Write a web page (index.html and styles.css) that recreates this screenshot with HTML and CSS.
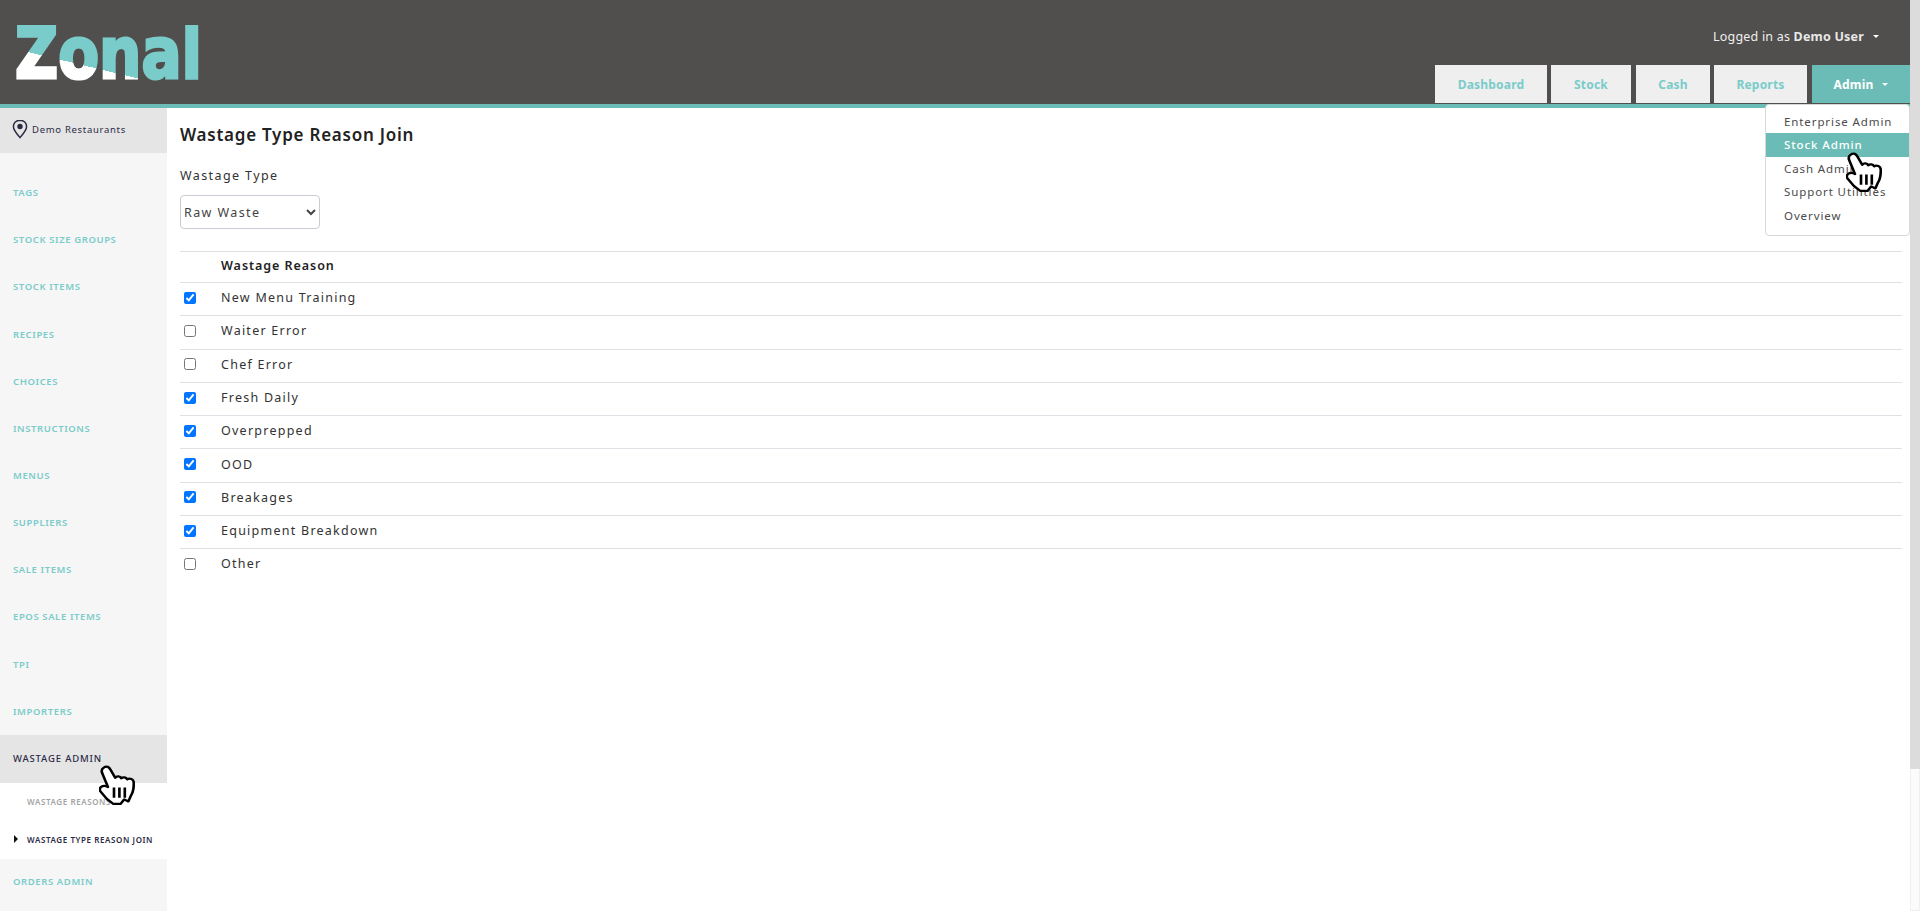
FILE: index.html
```html
<!DOCTYPE html>
<html lang="en">

<head>
    <meta charset="UTF-8">
    <meta name="viewport" content="width=device-width, initial-scale=1.0">
    <title>Wastage Type Reason Join</title>
    <link rel="stylesheet" href="styles.css">
</head>

<body>
    <div class="page">
        <div class="app">
            <header class="top-bar">
                <svg class="logo" width="210" height="104" viewBox="0 0 210 104">
                    <defs>
                        <linearGradient id="logoFill" gradientUnits="userSpaceOnUse" x1="82.800" y1="44" x2="73.200" y2="84">
                            <stop offset="0.5" stop-color="#7accca"></stop>
                            <stop offset="0.5" stop-color="#ffffff"></stop>
                        </linearGradient>
                        <clipPath id="logoClip">
                            <rect x="0" y="25" width="210" height="79"></rect>
                        </clipPath>
                    </defs>
                    <g clip-path="url(#logoClip)">
                        <text class="logo-text" x="15" y="78" textLength="187" lengthAdjust="spacingAndGlyphs" fill="url(#logoFill)" stroke="url(#logoFill)">Zonal</text>
                    </g>
                </svg>
                <div class="top-right">
                    <div class="user-line">Logged in as <b>Demo User</b><span class="caret caret-user"></span></div>
                    <nav class="tabs">
                        <a class="tab tab-dashboard">Dashboard</a>
                        <a class="tab tab-stock">Stock</a>
                        <a class="tab tab-cash">Cash</a>
                        <a class="tab tab-reports">Reports</a>
                        <a class="tab tab-admin active">Admin<span class="caret"></span></a>
                    </nav>
                </div>
            </header>
            <div class="teal-line"></div>

            <div class="content">
                <aside class="sidebar">
                    <div class="site-row">
                        <svg class="pin" width="16" height="20" viewBox="0 0 16 20">
                            <path d="M8 1.200C4.200 1.200 1.400 4 1.400 7.600C1.400 11.600 5.400 15.600 8 18.600C10.600 15.600 14.600 11.600 14.600 7.600C14.600 4 11.800 1.200 8 1.200Z" fill="none" stroke="#2b2b45" stroke-width="1.500"></path>
                            <circle cx="8" cy="7.500" r="2.700" fill="#2b2b45"></circle>
                        </svg>
                        <span>Demo Restaurants</span>
                    </div>
                    <ul class="side-menu">
                        <li>Tags</li>
                        <li>Stock Size Groups</li>
                        <li>Stock Items</li>
                        <li>Recipes</li>
                        <li>Choices</li>
                        <li>Instructions</li>
                        <li>Menus</li>
                        <li>Suppliers</li>
                        <li>Sale Items</li>
                        <li>EPOS Sale Items</li>
                        <li>TPI</li>
                        <li>Importers</li>
                        <li class="open">Wastage Admin</li>
                    </ul>
                    <ul class="sub-menu">
                        <li>Wastage Reasons</li>
                        <li class="current">Wastage Type Reason Join</li>
                    </ul>
                    <ul class="side-menu">
                        <li>Orders Admin</li>
                    </ul>
                </aside>

                <main class="main">
                    <h1>Wastage Type Reason Join</h1>
                    <label class="field-label" for="wastageType">Wastage Type</label>
                    <select id="wastageType" class="type-select">
                        <option>Raw Waste</option>
                    </select>
                    <table class="reason-table">
                        <thead>
                            <tr>
                                <th class="check-col"></th>
                                <th>Wastage Reason</th>
                            </tr>
                        </thead>
                        <tbody>
                            <tr><td class="check-col"><input type="checkbox" checked></td><td>New Menu Training</td></tr>
                            <tr><td class="check-col"><input type="checkbox"></td><td>Waiter Error</td></tr>
                            <tr><td class="check-col"><input type="checkbox"></td><td>Chef Error</td></tr>
                            <tr><td class="check-col"><input type="checkbox" checked></td><td>Fresh Daily</td></tr>
                            <tr><td class="check-col"><input type="checkbox" checked></td><td>Overprepped</td></tr>
                            <tr><td class="check-col"><input type="checkbox" checked></td><td>OOD</td></tr>
                            <tr><td class="check-col"><input type="checkbox" checked></td><td>Breakages</td></tr>
                            <tr><td class="check-col"><input type="checkbox" checked></td><td>Equipment Breakdown</td></tr>
                            <tr><td class="check-col"><input type="checkbox"></td><td>Other</td></tr>
                        </tbody>
                    </table>
                </main>
            </div>
        </div>

        <div class="scrollbar">
            <div class="scroll-thumb"></div>
        </div>
    </div>

    <!-- Dropdown hangs over the page -->
    <div class="admin-menu">
        <a>Enterprise Admin</a>
        <a class="hover">Stock Admin</a>
        <a>Cash Admin</a>
        <a>Support Utilities</a>
        <a>Overview</a>
    </div>

    <svg class="hand hand-top" width="36" height="40" viewBox="1 0 30 39" preserveAspectRatio="none">
        <use href="#handShape"></use>
    </svg>
    <svg class="hand hand-side" width="36" height="40" viewBox="1 0 30 39" preserveAspectRatio="none">
        <g id="handShape">
            <path d="M5 2.500C7.500 .5 9.500 2 10.500 4.500L14.500 12.500C16 10.500 18.500 10.800 19.500 13C21 11.500 23.500 11.800 24.500 14C26.500 12.500 30 13.500 30 17.500C30 23 29.500 27 27.500 30L25.500 35.500L22 33.500L19 38L13 38L7.500 33L2 25.500C.8 22 3.500 20 6.500 20.500L8.500 21.500L3.500 7.500C3 5.500 3.500 3.500 5 2.500Z" fill="#fff" stroke="#000" stroke-width="2.200" stroke-linejoin="round"></path>
            <path d="M13.500 22V32M18 22V32M22.500 22V32" fill="none" stroke="#000" stroke-width="2.200"></path>
        </g>
    </svg>
</body>

</html>
```

FILE: styles.css
```css
* {
    box-sizing: border-box;
}

html,
body {
    margin: 0;
    height: 911px;
    overflow: hidden;
}

body {
    font-family: "Noto Sans", "Open Sans", sans-serif;
    background: #fff;
    color: #333;
    letter-spacing: 1px;
}

.page {
    display: flex;
    height: 911px;
}

.app {
    flex: 1;
    min-width: 0;
}

/* Scrollbar */
.scrollbar {
    width: 10px;
    background: #fbfbfb;
    border: 1px solid #f0f0f0;
    border-top: none;
}

.scroll-thumb {
    height: 769px;
    margin: 0 -1px;
    background: #dcdcdc;
}

/* Header */
.top-bar {
    height: 104px;
    background: #504f4d;
    display: flex;
    justify-content: space-between;
}

.logo {
    width: 210px;
    height: 104px;
    overflow: visible;
}

.logo-text {
    font-family: "DejaVu Sans", sans-serif;
    font-weight: 700;
    font-size: 71px;
    letter-spacing: 0;
    stroke-width: 3px;
    stroke-linejoin: miter;
}

.top-right {
    display: flex;
    flex-direction: column;
    align-items: flex-end;
}

.user-line {
    margin-top: 27px;
    padding-right: 31px;
    height: 20px;
    line-height: 20px;
    font-size: 12.500px;
    letter-spacing: .2px;
    color: #eee;
}

.user-line b {
    font-weight: 700;
    color: #e8e8e8;
}

.caret {
    display: inline-block;
    margin-left: 9px;
    vertical-align: 3px;
    border-top: 3px solid #fff;
    border-left: 3px solid transparent;
    border-right: 3px solid transparent;
}

.tabs {
    display: flex;
    margin-top: 18px;
    height: 38px;
}

.tab {
    display: flex;
    align-items: center;
    justify-content: center;
    height: 38px;
    background: #efefef;
    color: #7accca;
    font-size: 12px;
    font-weight: 700;
    letter-spacing: .2px;
}

.tab-dashboard { width: 112px; margin-right: 4px; }
.tab-stock { width: 80px; margin-right: 5px; }
.tab-cash { width: 74px; margin-right: 4px; }
.tab-reports { width: 93px; margin-right: 5px; }
.tab-admin { width: 98px; }

.tab.active {
    background: #6bbcb6;
    color: #fff;
}

.teal-line {
    height: 4px;
    background: #6bbcb6;
}

/* Sidebar and main */
.content {
    display: flex;
    height: 803px;
    overflow: hidden;
}

.sidebar {
    width: 167px;
    flex-shrink: 0;
    background: #f6f6f6;
}

.site-row {
    height: 45px;
    background: #e5e5e5;
    display: flex;
    align-items: center;
    padding: 0 0 3px 12px;
    font-size: 9.500px;
    letter-spacing: .7px;
    color: #2b2b45;
}

.pin {
    margin-right: 4px;
}

.side-menu {
    list-style-type: none;
    margin: 0;
    padding: 16.200px 0 0;
}

.side-menu li {
    height: 47.150px;
    line-height: 47px;
    padding-left: 13px;
    font-size: 9.500px;
    font-weight: 600;
    text-transform: uppercase;
    letter-spacing: .6px;
    color: #7accca;
}

.side-menu li.open {
    height: 48px;
    background: #e5e5e5;
    font-weight: 500;
    letter-spacing: .85px;
    color: #2b2b45;
}

.sub-menu + .side-menu {
    padding-top: 0;
}

.sub-menu + .side-menu li {
    line-height: 46px;
}

.sub-menu {
    list-style-type: none;
    margin: 0;
    padding: 0;
    height: 76px;
    background: #fff;
}

.sub-menu li {
    height: 38px;
    line-height: 37px;
    padding-left: 27px;
    font-size: 8px;
    font-weight: 600;
    text-transform: uppercase;
    letter-spacing: .6px;
    color: #a3a3a3;
    white-space: nowrap;
}

.sub-menu li.current {
    position: relative;
    color: #2b2b45;
}

.sub-menu li.current::before {
    content: "";
    position: absolute;
    left: 14px;
    top: 14px;
    border-left: 4px solid #111;
    border-top: 4px solid transparent;
    border-bottom: 4px solid transparent;
}

.main {
    flex: 1;
    padding: 15px 8px 0 13px;
}

h1 {
    margin: 0 0 20px;
    font-size: 17px;
    line-height: 24px;
    font-weight: 600;
    letter-spacing: .75px;
    color: #222;
}

.field-label {
    display: block;
    font-size: 12.500px;
    line-height: 18px;
    letter-spacing: 1.400px;
    color: #333;
}

.type-select {
    display: block;
    width: 140px;
    height: 34px;
    margin-top: 10px;
    padding: 0;
    background: #fff;
    border: 1px solid #c9ccd3;
    border-radius: 4px;
    font-family: inherit;
    font-size: 12.500px;
    letter-spacing: 1.400px;
    text-indent: -1px;
    color: #444;
}

.reason-table {
    width: 100%;
    margin-top: 22px;
    border-collapse: collapse;
    font-size: 12.500px;
    letter-spacing: 1.250px;
}

.reason-table th,
.reason-table td {
    border-top: 1px solid #dee2e6;
    padding: 0;
    text-align: left;
    vertical-align: middle;
}

.reason-table th {
    height: 31px;
    padding-bottom: 4px;
    font-weight: 600;
    letter-spacing: .95px;
    color: #222;
}

.reason-table td {
    height: 33.300px;
    padding-bottom: 3px;
}

.reason-table .check-col {
    width: 41px;
    padding-left: 4px;
}

.check-col input {
    display: block;
    width: 12px;
    height: 12px;
    margin: 0;
}

.reason-table tbody tr:last-child td {
    height: 32px;
}

/* Admin dropdown */
.admin-menu {
    position: absolute;
    left: 1765px;
    top: 104px;
    width: 145px;
    height: 132px;
    padding-top: 5px;
    background: #fff;
    border: 1px solid #d8d8d8;
    border-radius: 4px;
    font-size: 11.500px;
    letter-spacing: .9px;
    color: #4b4b4b;
}

.admin-menu a {
    display: block;
    height: 23.400px;
    line-height: 23px;
    padding-left: 18px;
    white-space: nowrap;
}

.admin-menu a.hover {
    background: #6bbcb6;
    color: #fff;
    font-weight: 500;
}

/* Hand cursors from the recording */
.hand {
    position: absolute;
}

.hand-top {
    left: 1846px;
    top: 152px;
}

.hand-side {
    left: 99px;
    top: 765px;
}
```
